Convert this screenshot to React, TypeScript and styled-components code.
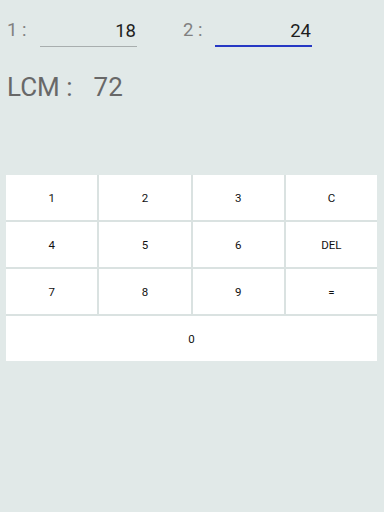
import React, { useState } from 'react';
import styled, { createGlobalStyle } from 'styled-components';

const GlobalStyle = createGlobalStyle`
  html, body {
    margin: 0;
    padding: 0;
    background: #e1e9e8;
    font-family: Roboto, "Noto Sans", Arial, sans-serif;
  }
`;

const Screen = styled.div`
  width: 384px;
  height: 512px;
  background: #e1e9e8;
  display: flex;
  flex-direction: column;
`;

const InputRow = styled.div`
  display: flex;
  align-items: flex-end;
  height: 47px;
  padding-left: 7px;
`;

const Label = styled.span<{ $width: number }>`
  width: ${(p) => p.$width}px;
  font-size: 18.5px;
  color: #808080;
  line-height: 27px;
  padding-bottom: 3px;
`;

const NumberField = styled.input<{ $focused?: boolean }>`
  width: 97px;
  height: 28px;
  box-sizing: border-box;
  border: none;
  border-bottom: ${(p) => (p.$focused ? '2px solid #2638c4' : '1px solid #a8aeae')};
  padding: 0 1px ${(p) => (p.$focused ? 2 : 3)}px 0;
  margin-right: 46px;
  background: transparent;
  text-align: right;
  font-family: inherit;
  font-size: 18.5px;
  color: #1e1e1e;
  outline: none;
`;

const Result = styled.div`
  display: flex;
  gap: 21px;
  padding: 21px 0 0 7px;
  height: 40px;
  font-size: 26px;
  line-height: 38px;
  color: #686868;
`;

const Keypad = styled.div`
  display: grid;
  grid-template-columns: repeat(4, 1fr);
  grid-auto-rows: 45px;
  gap: 2px;
  margin: 67px 7px 0 6px;
  background: #dae2e1;
`;

const Key = styled.button<{ $span?: number }>`
  grid-column: span ${(p) => p.$span ?? 1};
  border: none;
  background: #fff;
  font-family: inherit;
  font-size: 11.5px;
  color: #111;
  padding: 0;
  cursor: pointer;
`;

const keys = ['1', '2', '3', 'C', '4', '5', '6', 'DEL', '7', '8', '9', '='];

export default function App() {
  const [a, setA] = useState('18');
  const [b, setB] = useState('24');

  return (
    <Screen>
      <GlobalStyle />
      <InputRow>
        <Label $width={33}>1 :</Label>
        <NumberField value={a} onChange={(e) => setA(e.target.value)} />
        <Label $width={32}>2 :</Label>
        <NumberField $focused value={b} onChange={(e) => setB(e.target.value)} />
      </InputRow>
      <Result>
        <span>LCM :</span>
        <span>72</span>
      </Result>
      <Keypad>
        {keys.map((k) => (
          <Key key={k}>{k}</Key>
        ))}
        <Key $span={4}>0</Key>
      </Keypad>
    </Screen>
  );
}
